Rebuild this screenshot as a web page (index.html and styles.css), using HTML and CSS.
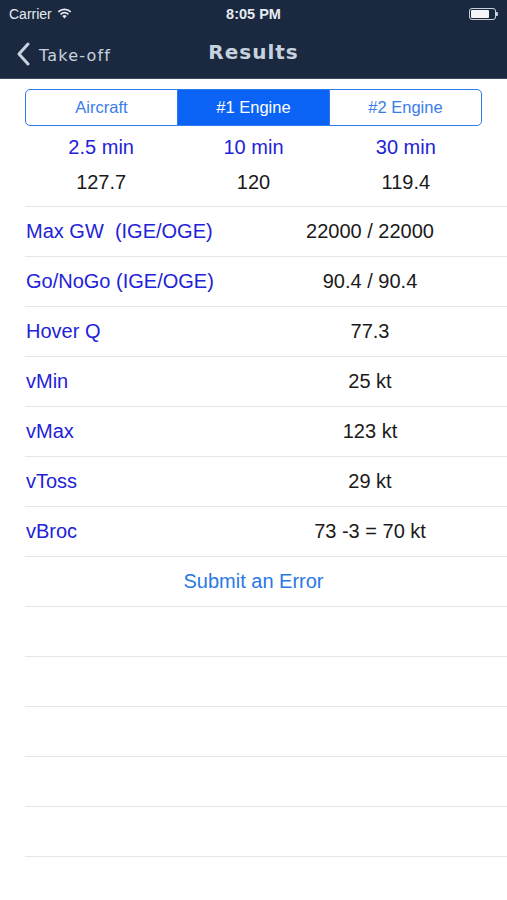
FILE: index.html
```html
<!DOCTYPE html>
<html>
<head>
<meta charset="utf-8">
<link rel="stylesheet" href="styles.css">
</head>
<body>
<div class="top">
  <div class="status">
    <div class="carrier">Carrier
      <svg class="wifi" width="15" height="12" viewBox="0 0 15 12">
        <path d="M7.5 11.5 L5.3 9.1 A3.2 3.2 0 0 1 9.7 9.1 Z" fill="#e6ebf2"/>
        <path d="M3.6 7.3 A5.6 5.6 0 0 1 11.4 7.3" stroke="#e6ebf2" stroke-width="1.7" fill="none"/>
        <path d="M1.3 4.9 A8.8 8.8 0 0 1 13.7 4.9" stroke="#e6ebf2" stroke-width="1.7" fill="none"/>
      </svg>
    </div>
    <div class="time">8:05 PM</div>
    <div class="battery"><span class="batt-body"><span class="batt-fill"></span></span><span class="batt-nub"></span></div>
  </div>
  <div class="nav">
    <div class="back">
      <svg width="14" height="24" viewBox="0 0 14 24"><path d="M12 2 L3 12 L12 22" stroke="#c7d2de" stroke-width="3" fill="none" stroke-linecap="round" stroke-linejoin="round"/></svg>
      <span>Take-off</span>
    </div>
    <div class="title">Results</div>
  </div>
</div>
<main class="content">
  <div class="segmented">
    <div class="seg">Aircraft</div>
    <div class="seg active">#1 Engine</div>
    <div class="seg">#2 Engine</div>
  </div>
  <div class="times">
    <div class="tcol"><div class="tlabel">2.5 min</div><div class="tval">127.7</div></div>
    <div class="tcol"><div class="tlabel">10 min</div><div class="tval">120</div></div>
    <div class="tcol"><div class="tlabel">30 min</div><div class="tval">119.4</div></div>
  </div>
  <div class="rows">
    <div class="row"><span class="label">Max GW&nbsp; (IGE/OGE)</span><span class="value">22000 / 22000</span></div>
    <div class="row"><span class="label">Go/NoGo (IGE/OGE)</span><span class="value">90.4 / 90.4</span></div>
    <div class="row"><span class="label">Hover Q</span><span class="value">77.3</span></div>
    <div class="row"><span class="label">vMin</span><span class="value">25 kt</span></div>
    <div class="row"><span class="label">vMax</span><span class="value">123 kt</span></div>
    <div class="row"><span class="label">vToss</span><span class="value">29 kt</span></div>
    <div class="row"><span class="label">vBroc</span><span class="value">73 -3 = 70 kt</span></div>
    <div class="row submit-row"><span class="submit">Submit an Error</span></div>
    <div class="row empty"></div>
    <div class="row empty"></div>
    <div class="row empty"></div>
    <div class="row empty"></div>
    <div class="row empty"></div>
    <div class="row empty"></div>
  </div>
</main>
</body>
</html>
```

FILE: styles.css
```css
* { box-sizing: border-box; }
html, body { margin: 0; padding: 0; }
body {
  width: 507px;
  height: 900px;
  overflow: hidden;
  background: #ffffff;
  font-family: "Liberation Sans", Arial, sans-serif;
}
.top {
  background: #1b2940;
  height: 79px;
  border-bottom: 1px solid #3a4a60;
}
.status {
  height: 28px;
  display: flex;
  align-items: center;
  justify-content: space-between;
  padding: 0 9px 0 9px;
  color: #e6ebf2;
  font-size: 14px;
  position: relative;
}
.carrier { display: flex; align-items: center; gap: 5px; }
.wifi { margin-top: -2px; }
.time {
  position: absolute;
  left: 0; right: 0;
  text-align: center;
  font-weight: bold;
  font-size: 14.5px;
}
.battery { display: flex; align-items: center; }
.batt-body {
  width: 27px; height: 12px;
  border: 1px solid #c9d1dc;
  border-radius: 3px;
  padding: 1px;
  display: flex;
}
.batt-fill { width: 18px; background: #f4f6f9; border-radius: 1px; }
.batt-nub { width: 2px; height: 4px; background: #c9d1dc; border-radius: 0 1px 1px 0; }
.nav {
  height: 50px;
  display: flex;
  align-items: center;
  position: relative;
  color: #c7d2de;
}
.back {
  display: flex;
  align-items: center;
  gap: 9px;
  padding-left: 16px;
  font-family: "DejaVu Sans", sans-serif;
  font-size: 16px;
  letter-spacing: 1.2px;
  margin-top: 2px;
}
.back span { margin-top: 2px; }
.title {
  position: absolute;
  left: 0; right: 0;
  text-align: center;
  font-family: "DejaVu Sans", sans-serif;
  font-size: 20px;
  font-weight: bold;
  letter-spacing: 1px;
  margin-top: -2px;
}
.content { padding: 10px 0 0 25px; }
.segmented {
  width: 457px;
  height: 37px;
  border: 1.5px solid #2f7bf0;
  border-radius: 5px;
  display: flex;
  overflow: hidden;
}
.seg {
  flex: 1;
  display: flex;
  align-items: center;
  justify-content: center;
  color: #3a7ce8;
  font-size: 16.5px;
}
.seg + .seg { border-left: 1px solid #2f7bf0; }
.seg.active { background: #0a63f5; color: #ffffff; }
.times {
  display: flex;
  width: 457px;
  height: 80px;
  padding-top: 9px;
}
.tcol { flex: 1; text-align: center; }
.tlabel { color: #2222d8; font-size: 20px; height: 35px; line-height: 24px; }
.tval { color: #1a1a1a; font-size: 20px; line-height: 24px; }
.rows { border-top: 1px solid #e6e6e6; }
.row {
  height: 50px;
  border-bottom: 1px solid #e6e6e6;
  display: flex;
  align-items: center;
  font-size: 20px;
}
.label { color: #2222d8; width: 228px; padding-left: 1px; }
.value { color: #1a1a1a; width: 234px; text-align: center; }
.submit-row { justify-content: center; padding-right: 25px; }
.submit { color: #2a78e4; }
```
